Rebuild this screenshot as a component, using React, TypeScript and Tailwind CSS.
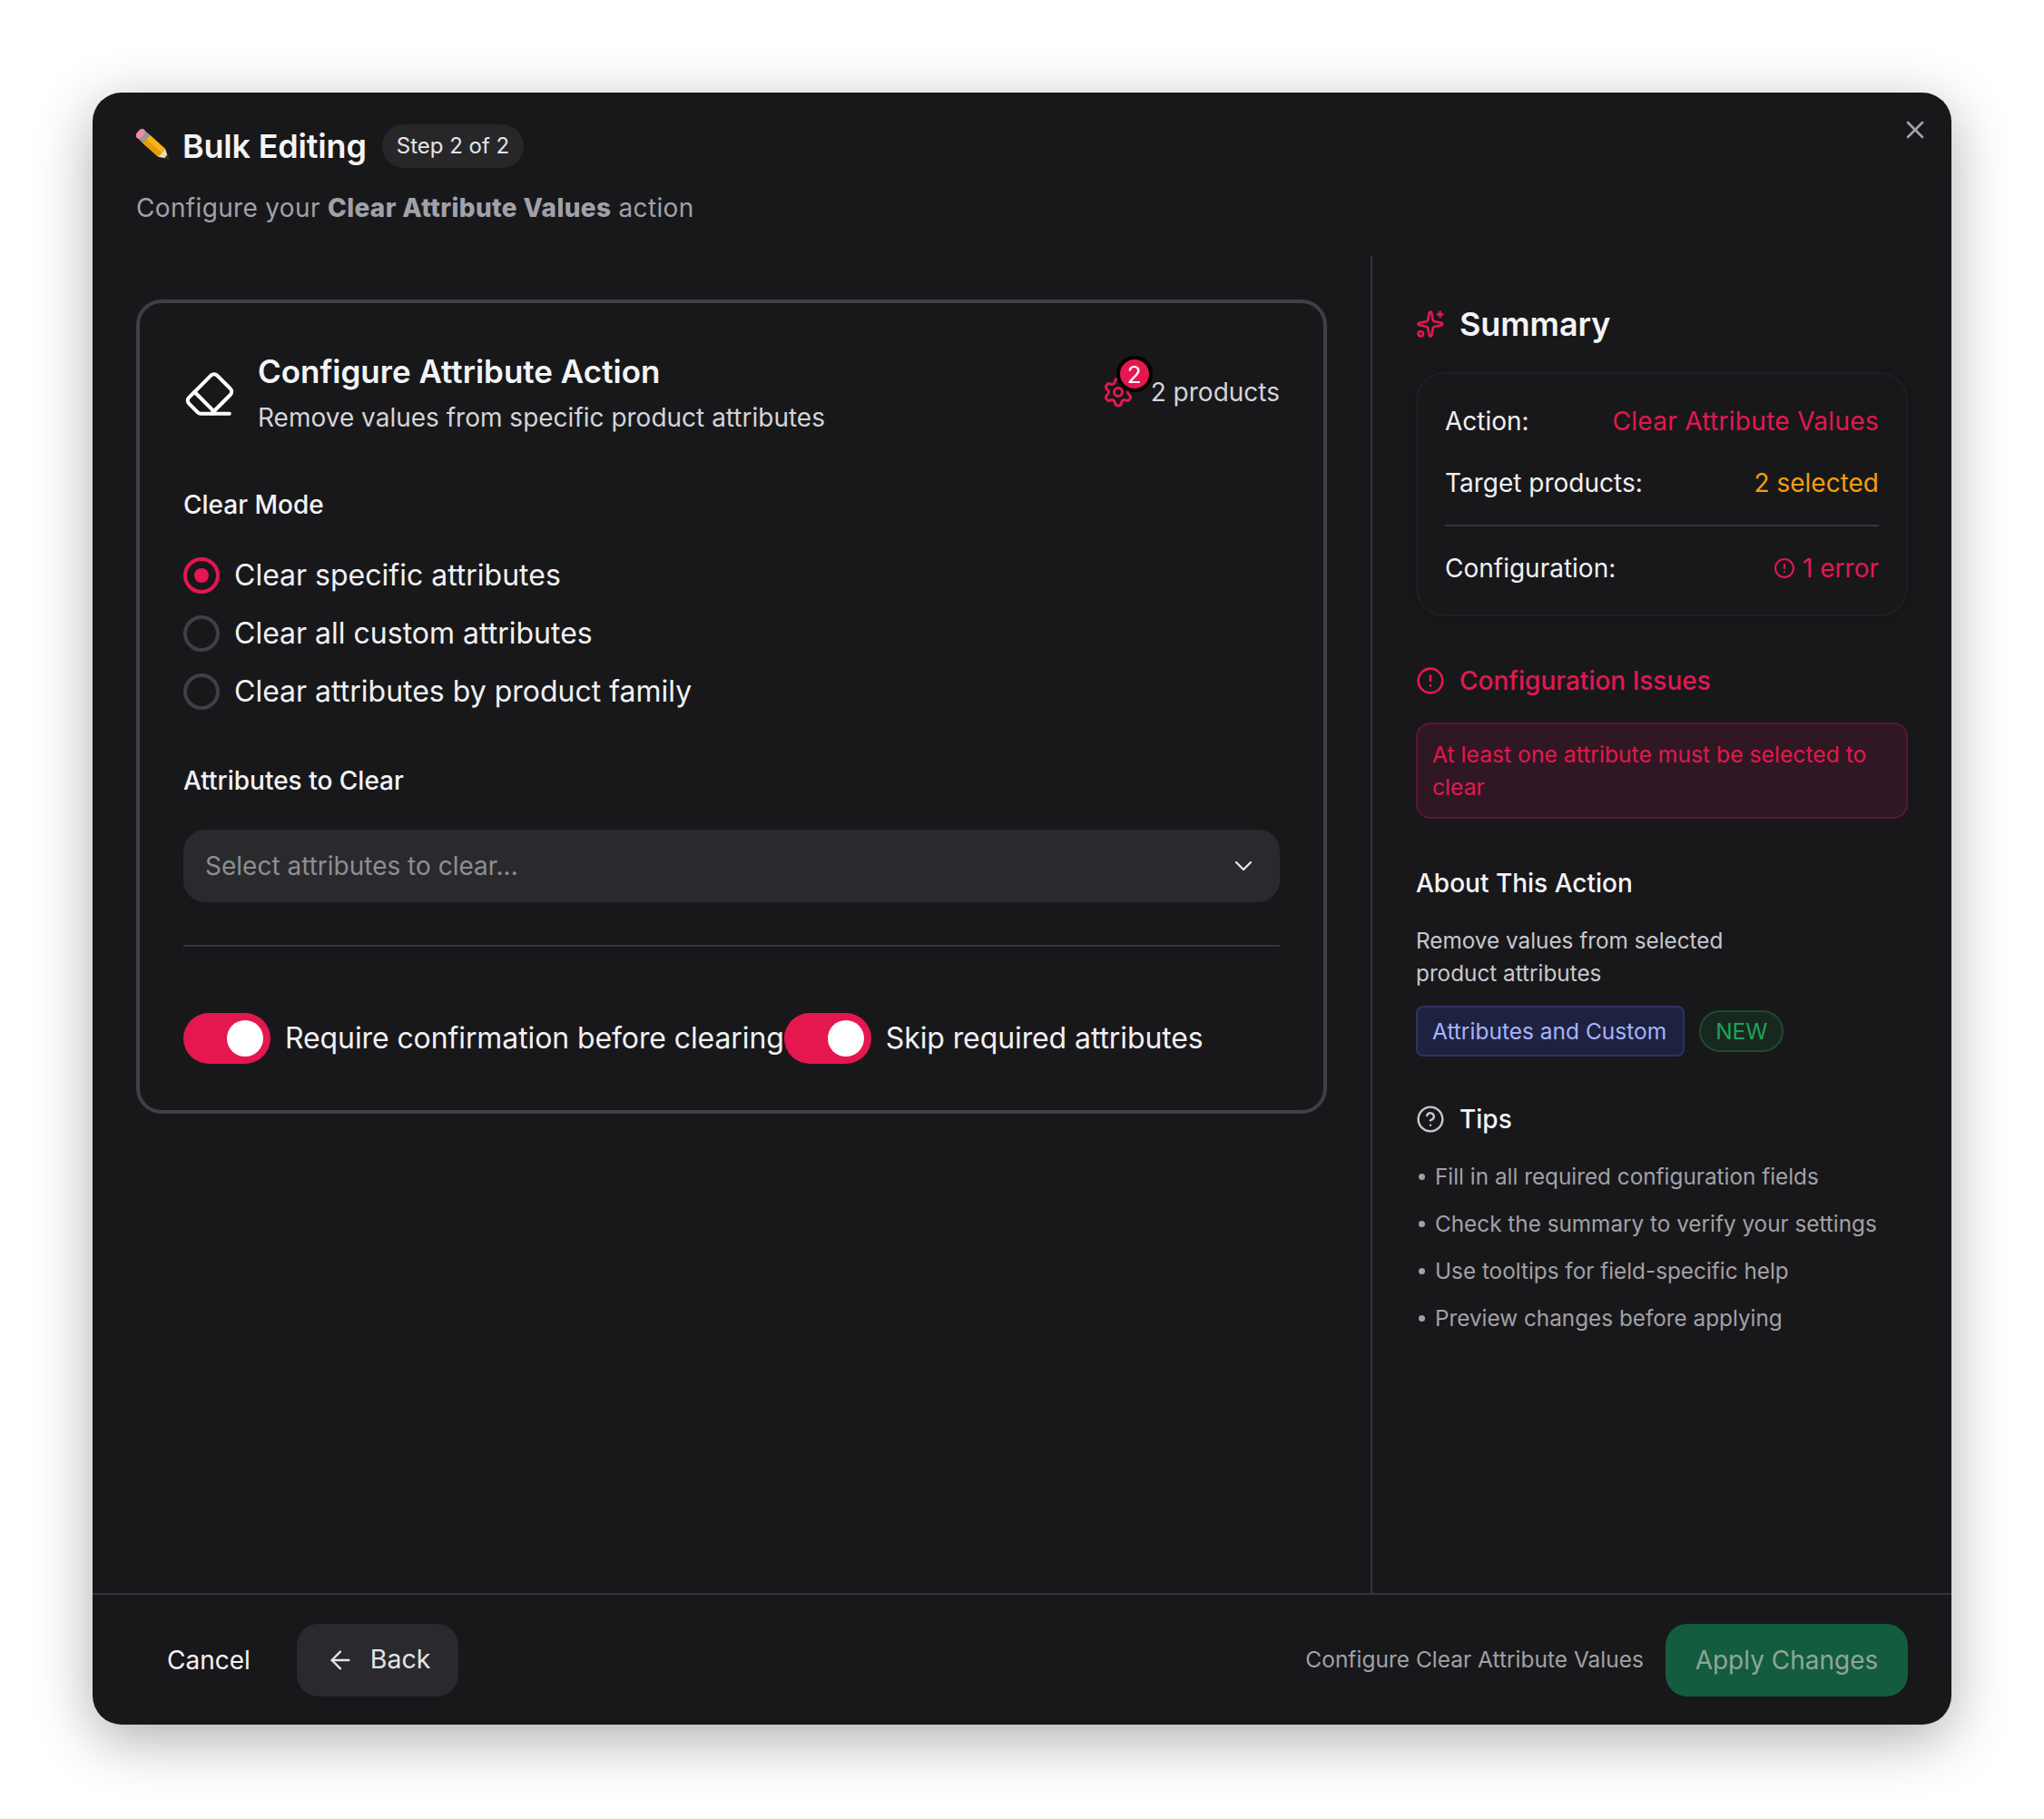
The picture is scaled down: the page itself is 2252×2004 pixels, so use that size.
import { ArrowLeft, ChevronDown, CircleAlert, CircleHelp, Eraser, Settings, Sparkles, X } from "lucide-react";

const tips = [
  "Fill in all required configuration fields",
  "Check the summary to verify your settings",
  "Use tooltips for field-specific help",
  "Preview changes before applying",
];

function PencilEmoji() {
  return (
    <svg width="40" height="38" viewBox="0 0 40 38" className="shrink-0">
      <g transform="rotate(42 20 19)">
        <rect x="-4" y="13" width="8" height="12" rx="3.5" fill="#ef8a9c" />
        <rect x="3" y="13" width="5" height="12" fill="#8f9aa6" />
        <rect x="8" y="13" width="23" height="12" fill="#f7b617" />
        <rect x="8" y="19" width="23" height="6" fill="#e59b0c" />
        <path d="M31 13 L41 19 L31 25 Z" fill="#f2dcb0" />
        <path d="M37 16.6 L43 19 L37 21.4 Z" fill="#33302c" />
      </g>
    </svg>
  );
}

function Radio({ label, checked }: { label: string; checked?: boolean }) {
  return (
    <label className="flex h-[40px] items-center gap-[16px]">
      <span
        className={`flex h-[40px] w-[40px] items-center justify-center rounded-full border-[4px] ${
          checked ? "border-[#e5174f]" : "border-[#3f3f46]"
        }`}
      >
        {checked && <span className="h-[16px] w-[16px] rounded-full bg-[#e5174f]" />}
      </span>
      <span className="text-[32px] text-[#f1f1f3]">{label}</span>
    </label>
  );
}

function Toggle({ label }: { label: string }) {
  return (
    <div className="flex items-center gap-[16px]">
      <span className="flex h-[56px] w-[96px] shrink-0 items-center justify-end rounded-full bg-[#e5174f] pr-[8px]">
        <span className="h-[40px] w-[40px] rounded-full bg-white" />
      </span>
      <span className="text-[32px] tracking-[-0.1px] whitespace-nowrap text-[#f1f1f3]">{label}</span>
    </div>
  );
}

export default function App() {
  return (
    <div className="h-[2004px] w-[2252px] bg-white pt-[102px] pl-[102px] [font-family:Inter,sans-serif]">
      <div className="relative flex h-[1798px] w-[2048px] flex-col rounded-[32px] bg-[#18181b] shadow-[0_16px_64px_rgba(0,0,0,0.32)]">
        <X className="absolute top-[25px] right-[24px] text-[#a1a1aa]" size={32} strokeWidth={2} />

        {/* header */}
        <div className="h-[180px] px-[48px] pt-[35px]">
          <div className="flex h-[48px] items-center">
            <PencilEmoji />
            <h1 className="ml-[11px] text-[36px] font-semibold tracking-[-0.2px] text-[#f4f4f5]">Bulk Editing</h1>
            <span className="ml-[17px] flex h-[48px] items-center rounded-full bg-[#27272a] px-[16px] text-[24px] text-[#e4e4e7]">
              Step 2 of 2
            </span>
          </div>
          <p className="mt-[24px] text-[28px] leading-[40px] tracking-[0.34px] text-[#a1a1aa]">
            Configure your <strong className="font-extrabold">Clear Attribute Values</strong> action
          </p>
        </div>

        {/* body */}
        <div className="flex min-h-0 flex-1">
          <div className="w-[1410px] border-r-[2px] border-[#34343a] py-[48px] pr-[48px] pl-[48px]">
            <div className="h-[897px] rounded-[28px] border-[4px] border-[#3f3f46] p-[48px] pt-[50px]">
              <div className="flex items-start justify-between">
                <div className="flex items-start gap-[24px]">
                  <Eraser className="mt-[21px] text-white" size={58} strokeWidth={1.7} />
                  <div>
                    <h2 className="text-[35px] leading-[50px] font-semibold text-[#f4f4f5]">
                      Configure Attribute Action
                    </h2>
                    <p className="mt-[4px] text-[28px] leading-[44px] text-[#d4d4d8]">
                      Remove values from specific product attributes
                    </p>
                  </div>
                </div>
                <div className="mt-[27px] flex items-center gap-[6px]">
                  <div className="relative h-[40px] w-[48px]">
                    <Settings className="absolute top-[2px] left-[0px] text-[#e5174f]" size={36} strokeWidth={2} />
                    <span className="absolute top-[-20px] left-[16px] flex h-[40px] w-[40px] items-center justify-center rounded-full border-[4px] border-black bg-[#e5174f] text-[26px] text-white">
                      2
                    </span>
                  </div>
                  <span className="text-[28px] text-[#d4d4d8]">2 products</span>
                </div>
              </div>

              <div className="mt-[54px] text-[28px] leading-[40px] font-medium text-[#f4f4f5]">Clear Mode</div>
              <div className="mt-[38px] flex flex-col gap-[24px]">
                <Radio label="Clear specific attributes" checked />
                <Radio label="Clear all custom attributes" />
                <Radio label="Clear attributes by product family" />
              </div>

              <div className="mt-[58px] text-[28px] leading-[40px] font-medium text-[#f4f4f5]">Attributes to Clear</div>
              <div className="mt-[34px] flex h-[80px] items-center justify-between rounded-[24px] bg-[#2a2a2e] pr-[24px] pl-[24px]">
                <span className="text-[28px] text-[#8e8e93]">Select attributes to clear...</span>
                <ChevronDown className="text-[#e4e4e7]" size={32} strokeWidth={1.8} />
              </div>
              <div className="mt-[47px] h-[2px] bg-[#36363b]" />
              <div className="mt-[73px] flex items-center">
                <Toggle label="Require confirmation before clearing" />
                <Toggle label="Skip required attributes" />
              </div>
            </div>
          </div>

          <div className="flex-1 px-[48px] pt-[47px]">
            <div className="flex h-[56px] items-center gap-[16px]">
              <Sparkles className="text-[#e5174f]" size={32} strokeWidth={2} />
              <h3 className="text-[36px] font-semibold tracking-[-0.1px] text-[#f4f4f5]">Summary</h3>
            </div>
            <div className="mt-[25px] h-[269px] rounded-[32px] border-[2px] border-[#1f1f23] px-[30px] pt-[32px] shadow-[0_2px_12px_rgba(0,0,0,0.15)]">
              <div className="flex h-[40px] items-center justify-between text-[28px]">
                <span className="text-[#f1f1f3]">Action:</span>
                <span className="tracking-[0.3px] text-[#e5174f]">Clear Attribute Values</span>
              </div>
              <div className="mt-[28px] flex h-[40px] items-center justify-between text-[28px]">
                <span className="text-[#f1f1f3]">Target products:</span>
                <span className="text-[#f59e0b]">2 selected</span>
              </div>
              <div className="mt-[26px] h-[2px] bg-[#36363b]" />
              <div className="mt-[26px] flex h-[40px] items-center justify-between text-[28px]">
                <span className="text-[#f1f1f3]">Configuration:</span>
                <span className="flex items-center gap-[8px] text-[#e5174f]">
                  <CircleAlert size={24} strokeWidth={2} />1 error
                </span>
              </div>
            </div>

            <div className="mt-[51px] flex h-[40px] items-center gap-[16px]">
              <CircleAlert className="text-[#e5174f]" size={32} strokeWidth={2} />
              <h4 className="text-[28px] font-medium text-[#e5174f]">Configuration Issues</h4>
            </div>
            <div className="mt-[26px] rounded-[16px] border-[2px] border-[#5c1631] bg-[#2f1823] px-[16px] py-[15px] text-[24.7px] leading-[36px] text-[#e5174f]">
              At least one attribute must be selected to clear
            </div>

            <h4 className="mt-[51px] text-[28px] leading-[40px] font-medium text-[#f4f4f5]">About This Action</h4>
            <p className="mt-[25px] max-w-[420px] text-[24.3px] leading-[36px] text-[#c8c8cc]">
              Remove values from selected product attributes
            </p>
            <div className="mt-[18px] flex items-center gap-[16px]">
              <span className="flex h-[56px] items-center rounded-[8px] border-[2px] border-[#2f3163] bg-[#1f2140] pr-[18px] pl-[16px] text-[24.5px] text-[#a5b4fc]">
                Attributes and Custom
              </span>
              <span className="flex h-[46px] items-center rounded-full border-[2px] border-[#1d4a30] bg-[#17291f] px-[16px] text-[24.5px] text-[#22a05a]">
                NEW
              </span>
            </div>

            <div className="mt-[49px] flex h-[40px] items-center gap-[16px]">
              <CircleHelp className="text-[#c8c8cc]" size={32} strokeWidth={1.8} />
              <h4 className="text-[28px] font-medium text-[#f4f4f5]">Tips</h4>
            </div>
            <ul className="mt-[25px] flex flex-col gap-[16px] text-[24.3px] leading-[36px] text-[#a1a1a6]">
              {tips.map((t) => (
                <li key={t} className="flex items-center gap-[11px]">
                  <span className="ml-[3px] h-[7px] w-[7px] rounded-full bg-[#a1a1a6]" />
                  {t}
                </li>
              ))}
            </ul>
          </div>
        </div>

        {/* footer */}
        <div className="flex h-[145px] items-center justify-between border-t-[2px] border-[#34343a] px-[48px]">
          <div className="flex items-center gap-[17px]">
            <button className="flex h-[80px] items-center px-[34px] text-[28px] text-[#f4f4f5]">Cancel</button>
            <button className="flex h-[80px] w-[178px] items-center gap-[17px] rounded-[24px] bg-[#2a2a2e] pl-[32px] text-[28.5px] text-[#e4e4e7]">
              <ArrowLeft size={32} strokeWidth={1.8} />
              Back
            </button>
          </div>
          <div className="flex items-center gap-[24px]">
            <span className="text-[24.5px] text-[#a1a1a6]">Configure Clear Attribute Values</span>
            <button className="flex h-[80px] w-[267px] items-center justify-center rounded-[24px] bg-[#145c3e] text-[28px] text-[#8ea79a]">
              Apply Changes
            </button>
          </div>
        </div>
      </div>
    </div>
  );
}
